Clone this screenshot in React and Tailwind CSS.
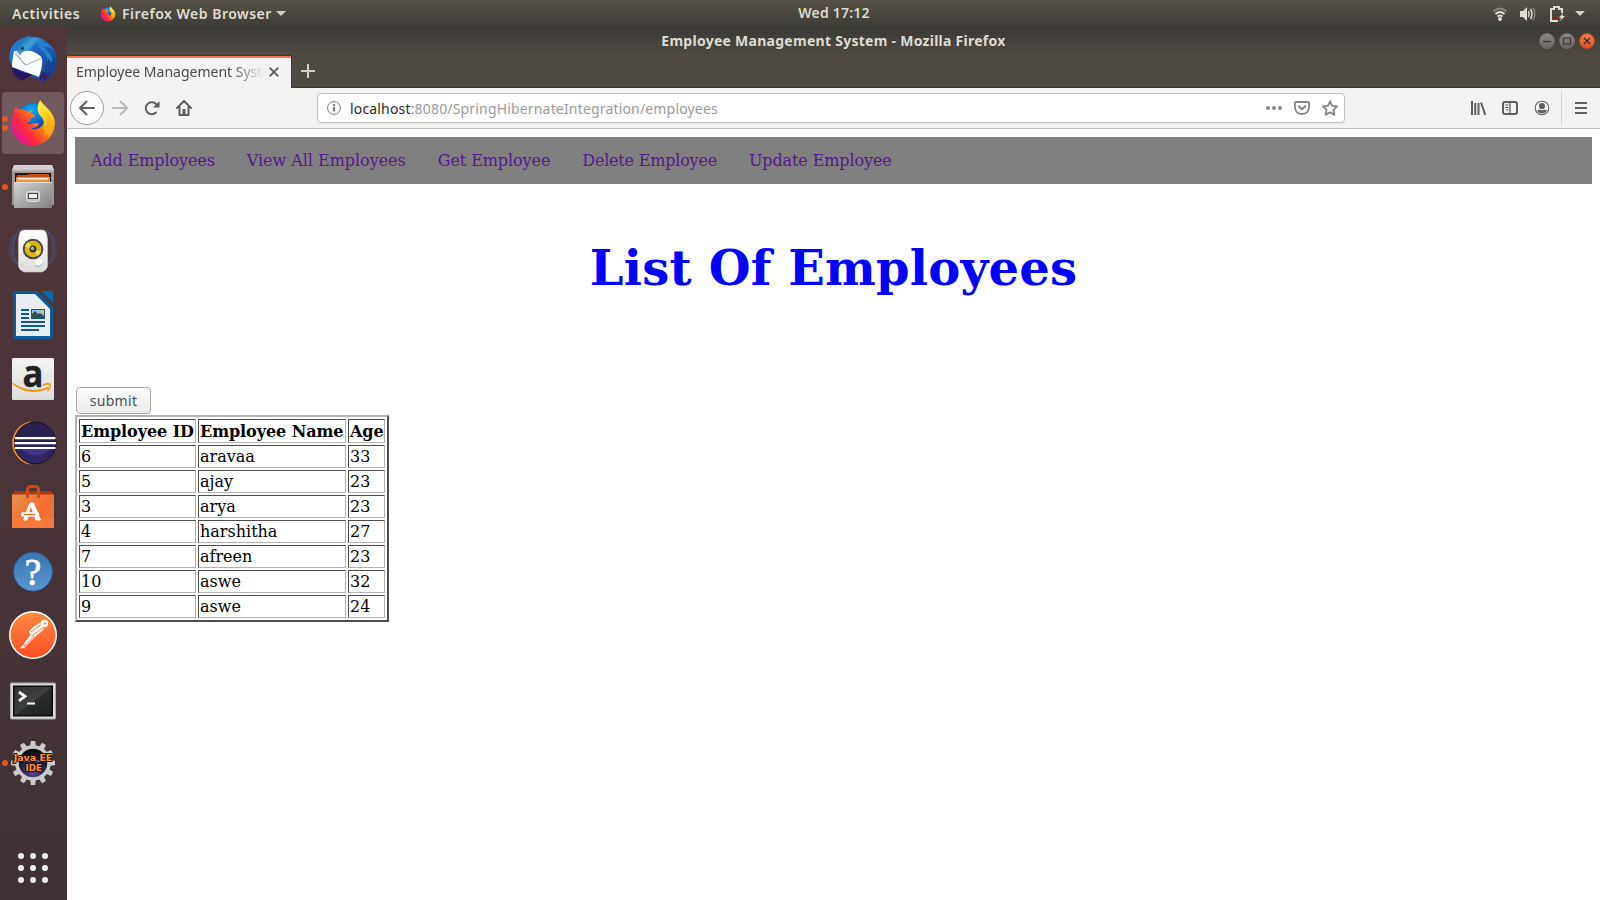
import React from "react";

const employees = [
  ["6", "aravaa", "33"],
  ["5", "ajay", "23"],
  ["3", "arya", "23"],
  ["4", "harshitha", "27"],
  ["7", "afreen", "23"],
  ["10", "aswe", "32"],
  ["9", "aswe", "24"],
];

const links = [
  ["Add Employees", "tracking-[-0.11px]"],
  ["View All Employees", "tracking-[-0.03px]"],
  ["Get Employee", "tracking-[-0.09px]"],
  ["Delete Employee", "tracking-[-0.2px]"],
  ["Update Employee", "tracking-[-0.11px]"],
];

function Firefox({ className, id }) {
  return (
    <svg viewBox="0 0 48 48" className={className}>
      <defs>
        <radialGradient id={id + "globe"} cx="0.45" cy="0.2" r="0.8">
          <stop offset="0" stopColor="#00b4f5" />
          <stop offset="0.5" stopColor="#0a63d8" />
          <stop offset="1" stopColor="#2b1a78" />
        </radialGradient>
        <linearGradient id={id + "body"} x1="0.95" y1="0.1" x2="0.1" y2="0.75">
          <stop offset="0" stopColor="#fff04a" />
          <stop offset="0.28" stopColor="#ffb80f" />
          <stop offset="0.52" stopColor="#ff6d1c" />
          <stop offset="0.76" stopColor="#ff2a40" />
          <stop offset="1" stopColor="#e0198c" />
        </linearGradient>
        <linearGradient id={id + "tail"} x1="0.3" y1="0" x2="0.6" y2="1">
          <stop offset="0" stopColor="#fff451" />
          <stop offset="0.5" stopColor="#ffd21f" />
          <stop offset="1" stopColor="#ff980e" />
        </linearGradient>
      </defs>
      <circle cx="24" cy="21" r="16.5" fill={`url(#${id}globe)`} />
      <path
        d="M7 6.500c.3 1.700 1.300 3 2.600 3.900 3-.9 5.800.1 8 1.700l5.900-.7c-.9 1-1.400 2-1.300 3.200.8.8 2.100 1 3.600 1.200.2 1.800-1.900 2.800-4.300 4.200l-.3 3.100c-1.500-.4-3 .2-3.600 1.200 1.500 1 3.200.9 5 .5 2-.5 4.300-1.200 6.200-.7.9.3 1.100 1.200.4 2.100-1.600 2.500-4.800 2.400-7.200 3.300 4.800 2 10.400-.1 12.600-5.400 2-5.200.3-9.800-2.600-12.800-3-3.600-1.500-7.300-.3-9.300l8.300 9c5.300 5.800 7.200 12.300 4.700 20-3 9.300-11.300 15.800-21.200 15.500C10.800 46.100 2.100 37.100 2.200 25.700c0-4.300 1-8 2.700-11.100C4.600 12 5.500 8.800 7 6.500Z"
        fill={`url(#${id}body)`}
      />
      <path
        d="M31.500 1c.6 4 3.200 5.900 6.300 8.700 6.400 5.600 9.500 13.300 6.600 20.900-.8 2.200-1.900 4.200-3.500 6-3.200-1.500-5.900-4.200-6-7.700.9-3.600.1-8.300-3-11.300-4.100-4.100-4.600-11.300-.4-16.600Z"
        fill={`url(#${id}tail)`}
      />
      <path d="M37 12c5.200 5 7 11.500 4.500 18-1.800 4.700-5 7.700-9 9.500 3-3.300 4.800-7 4.800-11.500 1.600-5 1.700-10.500-.3-16Z" fill="#ffab12" opacity=".6" />
    </svg>
  );
}

function Thunderbird() {
  return (
    <svg viewBox="0 0 48 48" className="size-12">
      <defs>
        <linearGradient id="tbBlue" x1="0" y1="0" x2="1" y2="1">
          <stop offset="0" stopColor="#1f87dc" />
          <stop offset="0.5" stopColor="#1b5fb9" />
          <stop offset="1" stopColor="#153a83" />
        </linearGradient>
        <linearGradient id="tbHead" x1="0" y1="0" x2="1" y2="0.6">
          <stop offset="0" stopColor="#0c5090" />
          <stop offset="0.5" stopColor="#3b9fd8" />
          <stop offset="1" stopColor="#1761b4" />
        </linearGradient>
      </defs>
      <path d="M17 2C8 4 1 11 .5 20c-.4 5 1 9 4 12l-2 2 9 11 8-4c7 3 11 3 14 6 7-3 12-9 14-17 1-8-1-15-6-20C35 3 26 0 17 2Z" fill="url(#tbBlue)" />
      <path d="M3 32c4 1 9 5 13 6l16-1-13 5-6 4C7 43 3 38 3 32Z" fill="#291660" />
      <path d="M5 16c5 0 8-2 12-1 8 1 13 4 16 8 1 6-1 13-3 19L3 32c0-6 1-10 2-16Z" fill="#fbfcfd" />
      <path d="M6 19l11 11 16-7M17 30l-2-1L6 16" fill="none" stroke="#a0a7b1" strokeWidth=".9" />
      <path d="M8 16C10 7 15 1 21 .5c-1 1-1.400 2-1 3 6-2 12-1 17 4-8-2-13 1-16 8-3 1-7-1-10 5Z" fill="url(#tbHead)" />
      <circle cx="13.500" cy="13.500" r="1.600" fill="#182746" />
      <path d="M29 7c7-1 13 3 16 9-4-4-7-5-10-4 5 5 6 10 4 15-1-6-4-11-9-14ZM37 15c5 4 7 8 6 14-1-3-3-5-5-6Z" fill="#2380d0" />
      <path d="M47 26l-3 5 1-7-5 7v-7l-4 7c0 7-2 11-4 15l4-4-1 4 5-5-1 3 5-6-1 2c3-4 5-9 4-14Z" fill="#184291" />
      <path d="M34 36l-3 9 5-7-1 8 5-8" fill="none" stroke="#352064" strokeWidth="2" />
    </svg>
  );
}

function Files() {
  return (
    <svg viewBox="0 0 48 48" className="size-12">
      <defs>
        <linearGradient id="cab" x1="0" y1="0" x2="1" y2="1">
          <stop offset="0" stopColor="#d4d4d4" />
          <stop offset=".5" stopColor="#a9a9a9" />
          <stop offset="1" stopColor="#828282" />
        </linearGradient>
      </defs>
      <path d="M5 2h38l2 6v34H3V8Z" fill="#999" />
      <path d="M5 2h38l2 5H3Z" fill="#d2d2d2" />
      <path d="M3 6.500h42v2H3Z" fill="#b8b8b8" />
      <path d="M6 10h36v10H6Z" fill="#251710" />
      <path d="M8 12h10l2-1h20v9H8Z" fill="#c74c13" />
      <path d="M7 14h34v5H7Z" fill="#ed9343" />
      <path d="M9 15h30v1.500H9Z" fill="#fff8e7" />
      <path d="M5 19h38v26H5Z" fill="url(#cab)" />
      <path d="M5 19h38v1H5Z" fill="#e0e0e0" />
      <rect x="17.500" y="28.500" width="13" height="10" rx="2" fill="#c0c0c0" stroke="#dedede" />
      <rect x="19.500" y="30.500" width="9" height="5" fill="#eee" stroke="#444" />
    </svg>
  );
}

function Rhythmbox() {
  return (
    <svg viewBox="0 0 48 48" className="size-12">
      <defs>
        <linearGradient id="spk" x1="0" y1="0" x2="0" y2="1">
          <stop offset="0" stopColor="#fff" />
          <stop offset="1" stopColor="#dcddda" />
        </linearGradient>
      </defs>
      <g fill="none" stroke="#455c8c" strokeWidth="2" opacity=".6">
        <path d="M10 3C2 13 2 31 9 37" /><path d="M38 3c8 10 8 28 1 34" />
        <path d="M5 8C0 16 0 28 5 35" opacity=".6" /><path d="M43 8c5 8 5 20 0 27" opacity=".6" />
      </g>
      <path d="M15 3h18q3.500 0 4.500 3.500L38.500 12v27q-.5 4-5.500 6H15q-5-2-5.500-6V12l1-5.500Q11.500 3 15 3Z" fill="url(#spk)" stroke="#c6c7c3" strokeWidth=".6" />
      <circle cx="24" cy="22" r="10.300" fill="#4a4a48" />
      <circle cx="24" cy="22" r="8.300" fill="#d9b814" />
      <path d="M24 22L16 19.500a8.300 8.300 0 0 1 3-4.500ZM24 22l8 2.500a8.300 8.300 0 0 1-3.500 4.500Z" fill="#f6e04a" />
      <circle cx="24" cy="22" r="3.500" fill="#32353a" />
      <circle cx="23.500" cy="21.500" r="1.700" fill="#a8b0ba" />
      <circle cx="30" cy="36" r="4" fill="#f8f8f7" />
      <path d="M26.500 38q3.500 4 7.500-2" fill="none" stroke="#b5b5b5" strokeWidth="1.300" />
      <rect x="14" y="36" width="4" height="4" rx="1" fill="none" stroke="#d4d4d4" />
    </svg>
  );
}

function Writer() {
  return (
    <svg viewBox="0 0 48 48" className="size-12">
      <path d="M6 0h22l16 16v30q0 2-2 2H6q-2 0-2-2V2q0-2 2-2Z" fill="#0b5c95" />
      <path d="M7 3h19l15 15v27H7Z" fill="#e9edf0" />
      <path d="M32 0h10q2 0 2 2v10Z" fill="#0967a5" />
      <g fill="#10578f">
        <path d="M12 18h8v2h-8zM12 22h8v2h-8zM12 26h8v2h-8zM12 30h24v2H12zM12 34h24v2H12zM12 38h18v2H12z" />
        <path d="M22 18h14v10H22z" />
      </g>
      <path d="M23 19h12v8H23Z" fill="#8cc6ed" />
      <circle cx="33.500" cy="20.500" r="1.500" fill="#f3cc45" />
      <path d="M23 27v-4l3-3 3 3 2-1 4 3v2Z" fill="#384c4e" />
    </svg>
  );
}

function Amazon() {
  return (
    <svg viewBox="0 0 48 48" className="size-12">
      <defs>
        <linearGradient id="amz" x1="0" y1="0" x2="0" y2="1">
          <stop offset="0" stopColor="#f4f4f4" /><stop offset="1" stopColor="#dcdcdc" />
        </linearGradient>
      </defs>
      <rect x="3" y="3" width="42" height="42" rx="1.500" fill="url(#amz)" />
      <text x="24" y="31.500" textAnchor="middle" fontFamily="Open Sans, sans-serif" fontWeight="700" fontSize="37" fill="#222" stroke="#222" strokeWidth=".3" textLength="21" lengthAdjust="spacingAndGlyphs">a</text>
      <path d="M3 28.500c11 10 26 11 37 4.500l-1-1.500C28 37 17 36 4 28Z" fill="#f59a16" />
      <path d="M34 30.500c3-2 6-2 7-1s-.5 3.500-2.500 6.500" fill="none" stroke="#f59a16" strokeWidth="1.700" />
    </svg>
  );
}

function Eclipse() {
  return (
    <svg viewBox="0 0 48 48" className="size-12">
      <defs>
        <linearGradient id="ecl" x1="0" y1="0" x2="0" y2="1">
          <stop offset="0" stopColor="#2a2150" /><stop offset=".6" stopColor="#2b2257" /><stop offset="1" stopColor="#32286a" />
        </linearGradient>
      </defs>
      <path d="M23 2.200a21.900 21.900 0 0 0 0 43.600C7 41 7 8 23 2.200Z" fill="#f7921d" />
      <circle cx="26.200" cy="24" r="20.800" fill="url(#ecl)" stroke="#15112f" strokeWidth="1" />
      <path d="M12 29h29a15 10 0 0 1-29 0Z" fill="#44358b" />
      <path d="M6 18h40.500v2.200H6zM5.500 23h41.500v2.200h-41.500zM6 28h40.500v2H6z" fill="#fff" />
    </svg>
  );
}

function Software() {
  return (
    <svg viewBox="0 0 48 48" className="size-12">
      <defs>
        <linearGradient id="bag" x1="0" y1="0" x2="1" y2="1">
          <stop offset="0" stopColor="#e99552" /><stop offset=".5" stopColor="#f16f32" /><stop offset="1" stopColor="#f37335" />
        </linearGradient>
      </defs>
      <g transform="translate(0 1)">
        <path d="M3 11l3-4h36l3 4Z" fill="#ad3912" />
        <path d="M3 10.500h42V44H3Z" fill="url(#bag)" />
        <path d="M3 34h42v10H3Z" fill="#ff8246" opacity=".45" />
        <path d="M18.500 14V6q0-3.500 3-3.500h5q3 0 3 3.500v8" fill="none" stroke="#cf4818" strokeWidth="3" />
        <path d="M14.500 36l6-16h1.500l-4 16ZM21 19h3.500l7 17h-4.500Z" fill="#fff" stroke="#fff" strokeWidth="1" />
        <path d="M14 30.500h14" stroke="#fff" strokeWidth="4.500" strokeLinecap="round" />
        <path d="M15 30.500h11" stroke="#ee6e30" strokeWidth="1.300" />
      </g>
    </svg>
  );
}

function Help() {
  return (
    <svg viewBox="0 0 48 48" className="size-12">
      <defs>
        <linearGradient id="hlp" x1="0" y1="0" x2="0" y2="1">
          <stop offset="0" stopColor="#3775b0" /><stop offset="1" stopColor="#5a99cf" />
        </linearGradient>
      </defs>
      <circle cx="24" cy="25.600" r="19.800" fill="#263149" />
      <circle cx="24" cy="24.800" r="19.300" fill="url(#hlp)" stroke="#2e649c" />
      <text x="24" y="38.300" textAnchor="middle" fontFamily="Liberation Serif, serif" fontSize="37" fill="#fff" stroke="#fff" strokeWidth=".8">?</text>
    </svg>
  );
}

function Postman() {
  return (
    <svg viewBox="0 0 48 48" className="size-12">
      <defs>
        <linearGradient id="pst" x1="0" y1="0" x2="0" y2="1">
          <stop offset="0" stopColor="#ff8b43" /><stop offset="1" stopColor="#ff4e25" />
        </linearGradient>
      </defs>
      <circle cx="24" cy="24" r="24" fill="#fff" />
      <circle cx="24" cy="24" r="22.500" fill="url(#pst)" />
      <circle cx="35.500" cy="12.500" r="3.700" fill="#fff" />
      <path d="M31 12c-5 2-8 5-11 8.500l1.500 3.500-8.500 11-2.500 2.500 4.500-.5 10.500-10.500 9-8v-4Z" fill="#fff" />
      <path d="M22 21l10-7.500M24 24l11-8M25.500 26l-3.500-2.500M14.500 36l10.500-10.500M34 13l4-1M14 33l2.500 1.500" stroke="#ff6a34" strokeWidth=".9" />
    </svg>
  );
}

function Terminal() {
  return (
    <svg viewBox="0 0 48 48" className="size-12">
      <defs>
        <linearGradient id="trm" x1="0" y1="0" x2="1" y2="1">
          <stop offset="0" stopColor="#303332" /><stop offset=".5" stopColor="#3d403f" /><stop offset=".52" stopColor="#2b2d2d" /><stop offset="1" stopColor="#1f2121" />
        </linearGradient>
      </defs>
      <rect x="1.500" y="8" width="45" height="36" rx="1" fill="#d7d7d5" stroke="#aaa" />
      <rect x="4" y="10.500" width="40" height="31" fill="#0b0b0b" />
      <rect x="5.500" y="12" width="37" height="28" fill="url(#trm)" />
      <path d="M10 17l6 4.300-6 4.500" fill="none" stroke="#fff" strokeWidth="2.800" />
      <path d="M18 28.500h8" stroke="#fff" strokeWidth="2" />
    </svg>
  );
}

function JavaEE() {
  return (
    <svg viewBox="0 0 48 48" className="size-12">
      <defs>
        <radialGradient id="jee" cx=".5" cy=".85" r=".8">
          <stop offset="0" stopColor="#554389" /><stop offset=".7" stopColor="#161429" /><stop offset="1" stopColor="#0b0b12" />
        </radialGradient>
      </defs>
      <g fill="#cacbc9">
        {[0, 30, 60, 90, 120, 150, 180, 210, 240, 270, 300, 330].map((a) => (
          <path key={a} d="M21 9l.8-7h4.400l.8 7Z" transform={`rotate(${a} 24 24)`} />
        ))}
      </g>
      <circle cx="24" cy="24" r="16" fill="url(#jee)" stroke="#cacbc9" strokeWidth="3.500" />
      <path d="M10 22h28" stroke="#665c86" strokeWidth="2" />
      <g fontFamily="DejaVu Sans, sans-serif" fontWeight="700" fontSize="9" fill="#ff9231" stroke="#1c100a" strokeWidth="1.800" strokeLinejoin="round" paintOrder="stroke" textAnchor="middle">
        <text x="24" y="22" textLength="38.500" lengthAdjust="spacingAndGlyphs">Java EE</text>
        <text x="24.800" y="32" textLength="16.500" lengthAdjust="spacingAndGlyphs">IDE</text>
      </g>
    </svg>
  );
}

const dock = [
  { el: <Thunderbird /> },
  { el: <Firefox id="dock" className="size-12" />, dots: 2, active: true },
  { el: <Files />, dots: 1 },
  { el: <Rhythmbox /> },
  { el: <Writer /> },
  { el: <Amazon /> },
  { el: <Eclipse /> },
  { el: <Software /> },
  { el: <Help /> },
  { el: <Postman /> },
  { el: <Terminal /> },
  { el: <JavaEE />, dots: 1 },
];

function Dock() {
  return (
    <aside className="flex w-[67px] shrink-0 flex-col bg-linear-to-b from-[#513639] via-[#49343a] to-[#3e3133] pt-px pb-[17px]">
      <div className="flex flex-col gap-0.5">
        {dock.map((item, i) => (
          <div key={i} className={"relative ml-0.5 flex h-[62px] w-[62px] items-center justify-center rounded " + (item.active ? "bg-[#705a5e]" : "")}>
            {item.el}
            {item.dots && (
              <div className="absolute inset-y-0 left-0 flex flex-col items-center justify-center gap-[3px]">
                {Array.from({ length: item.dots }, (_, k) => (
                  <span key={k} className="size-1.5 rounded-full bg-[#e95420]" />
                ))}
              </div>
            )}
          </div>
        ))}
      </div>
      <div className="mt-auto ml-[18px] grid w-[30px] grid-cols-3 gap-1.5">
        {Array.from({ length: 9 }, (_, i) => (
          <span key={i} className="size-1.5 rounded-full bg-[#f0efef]" />
        ))}
      </div>
    </aside>
  );
}

function TopBar() {
  return (
    <header className="flex h-[27px] shrink-0 items-center bg-linear-to-b from-[#575349] to-[#3d3c37] text-[14px] font-semibold text-[#dfdbd2]">
      <div className="flex w-[734px] items-center">
        <span className="ml-3 w-[88px] tracking-[0.58px] whitespace-nowrap">Activities</span>
        <Firefox id="top" className="size-4" />
        <span className="ml-1.5 w-[154px] tracking-[0.5px] whitespace-nowrap">Firefox Web Browser</span>
        <svg className="h-[5px] w-[10px]" viewBox="0 0 10 5"><path d="M0 0h10L5 5Z" fill="#d3d0c8" /></svg>
      </div>
      <span className="-mt-0.5 w-[200px] text-center tracking-[0.2px] whitespace-nowrap">Wed 17:12</span>
      <div className="ml-auto flex items-center pr-[15px]">
        <svg className="h-[14px] w-[14px]" viewBox="0 0 14 14" fill="none">
          <path d="M.5 4.500Q7-1.500 13.500 4.500" stroke="#85827a" strokeWidth="2" />
          <path d="M2.500 7Q7 3 11.500 7M4.500 9.500Q7 7.500 9.500 9.500" stroke="#dfdbd2" strokeWidth="1.800" />
          <circle cx="7" cy="12" r="2" fill="#dfdbd2" />
        </svg>
        <svg className="ml-[13px] h-[14px] w-[16px]" viewBox="0 0 16 14" fill="none">
          <path d="M0 4h3l4-4v14l-4-4H0Z" fill="#dfdbd2" />
          <path d="M8.500 4q1.500 3 0 6M10.500 2q3 5 0 10" stroke="#dfdbd2" strokeWidth="1.500" />
          <path d="M13 .500q3.500 6.500 0 13" stroke="#85827a" strokeWidth="1.500" />
        </svg>
        <svg className="ml-[14px] h-[16px] w-[15px]" viewBox="0 0 15 16" fill="none">
          <path d="M8 15H1V3h3V1h5v2h3v4" stroke="#dfdbd2" strokeWidth="2" />
          <path d="M3 11h4v2H3Z" fill="#c00" />
          <path d="M13 7l-4 5h2.500L9 16l6-6h-2.500Z" fill="#dfdbd2" />
        </svg>
        <svg className="ml-[10px] h-[5px] w-[10px]" viewBox="0 0 10 5"><path d="M0 0h10L5 5Z" fill="#d3d0c8" /></svg>
      </div>
    </header>
  );
}

function WindowButton({ children, close }) {
  return (
    <span className={"flex size-4 items-center justify-center rounded-full border bg-linear-to-b " + (close ? "border-[#c9481f] from-[#f27c55] to-[#e2521f]" : "border-[#6f6d66] from-[#8d8b84] to-[#67655e]")}>
      <svg viewBox="0 0 16 16" className="size-4 shrink-0" fill="none" stroke="#33322e" strokeWidth="1.200">{children}</svg>
    </span>
  );
}

function Chrome() {
  return (
    <div className="flex h-[102px] shrink-0 flex-col">
      <div className="flex h-7 items-center bg-linear-to-b from-[#3a3935] to-[#4e4b43]">
        <div className="w-20" />
        <div className="-mt-px flex-1 text-center text-[14px] font-bold tracking-[0.27px] text-[#dfdbd2]"><span className="whitespace-nowrap">Employee Management System - Mozilla Firefox</span></div>
        <div className="flex w-20 items-center justify-end gap-1 pr-[5px]">
          <WindowButton><path d="M4 8.500h8" /></WindowButton>
          <WindowButton><path d="M4.500 5h7v6h-7Z" /></WindowButton>
          <WindowButton close><path d="M5 5l6 6M11 5l-6 6" /></WindowButton>
        </div>
      </div>
      <div className="flex h-[33px] border-b border-[#393834] bg-[#4f4b43]">
        <div className="-mb-px flex w-[225px] border-t border-r border-[#393834]">
          <div className="flex flex-1 items-center border-t-2 border-[#f0794a] bg-[#f4f3f2]">
            <div className="-mt-[3px] ml-[9px] w-[188px] overflow-hidden text-[14px] whitespace-nowrap text-[#4b4b4b] [mask-image:linear-gradient(to_right,black_155px,transparent_188px)]">Employee Management System</div>
            <svg className="-mt-[3px] ml-[5px] size-[10px]" viewBox="0 0 10 10" stroke="#5c5c5c" strokeWidth="1.800"><path d="M.7.700l8.600 8.600M9.300.700L.7 9.300" /></svg>
          </div>
        </div>
        <svg className="mt-[9px] ml-[9px] size-[14px]" viewBox="0 0 14 14" stroke="#d2d0cc" strokeWidth="2"><path d="M7 0v14M0 7h14" /></svg>
      </div>
      <div className="flex h-[41px] items-center border-b border-[#c4c1bd] bg-[#f4f3f2] text-[#5f5f5f]">
        <div className="ml-[3px] flex size-[34px] items-center justify-center rounded-full border border-[#9f9f9f] bg-[#fcfcfc]">
          <svg viewBox="0 0 16 16" className="size-4" fill="none" stroke="currentColor" strokeWidth="2" strokeLinecap="round" strokeLinejoin="round"><path d="M15 8H1.500M7.500 1.500L1 8l6.500 6.500" /></svg>
        </div>
        <svg viewBox="0 0 16 16" className="ml-2 size-4 text-[#b9b9b8]" fill="none" stroke="currentColor" strokeWidth="2" strokeLinecap="round" strokeLinejoin="round"><path d="M1 8h13.500M8.500 1.500L15 8l-6.500 6.500" /></svg>
        <svg viewBox="0 0 16 16" className="ml-4 size-4" fill="none" stroke="currentColor" strokeWidth="2"><path d="M12 12.500A6 6 0 1 1 12.800 5" strokeLinecap="round" /><path d="M15.500 1v6.500H9Z" fill="currentColor" stroke="none" /></svg>
        <svg viewBox="0 0 16 16" className="ml-4 size-4" fill="none" stroke="currentColor" strokeWidth="2" strokeLinecap="round" strokeLinejoin="round"><path d="M1 8l7-7 7 7M3.500 7v8h9V7" /><path d="M6.500 9h3v6h-3Z" fill="currentColor" stroke="none" /></svg>
        <div className="ml-[125px] flex h-[30px] w-[1028px] items-center rounded border border-[#c4c1bd] bg-white shadow-[0_1px_2px_rgba(0,0,0,0.05)]">
          <svg viewBox="0 0 14 14" className="ml-[9px] size-[14px]" fill="none" stroke="#777" strokeWidth="1"><circle cx="7" cy="7" r="6.400" /><path d="M7 6v4.500M7 3v1.800" strokeWidth="2" /></svg>
          <span className="ml-[9px] text-[14px] tracking-[0.17px] whitespace-nowrap text-[#9b9b9b]"><span className="text-[#2b2b2b]">localhost</span>:8080/SpringHibernateIntegration/employees</span>
          <div className="mr-[6px] ml-auto flex items-center text-[#848484]">
            <svg viewBox="0 0 16 16" className="size-4" fill="currentColor"><circle cx="2" cy="8" r="2" /><circle cx="8" cy="8" r="2" /><circle cx="14" cy="8" r="2" /></svg>
            <svg viewBox="0 0 16 16" className="ml-3 size-4" fill="none" stroke="currentColor" strokeWidth="1.800" strokeLinecap="round" strokeLinejoin="round"><path d="M2 2h12q1.100 0 1.100 1.100V7Q14.500 14 8 14T.9 7V3.100Q.9 2 2 2Z" /><path d="M4.800 6.200L8 9.300l3.200-3.100" strokeWidth="2" /></svg>
            <svg viewBox="0 0 16 16" className="ml-3 size-4" fill="none" stroke="currentColor" strokeWidth="1.800" strokeLinejoin="round"><path d="M8 1.300l2.100 4.500 5 .6-3.700 3.400 1 5L8 12.400l-4.400 2.400 1-5L.9 6.400l5-.6Z" /></svg>
          </div>
        </div>
        <div className="ml-auto flex items-center">
          <svg viewBox="0 0 16 16" className="size-4" fill="none" stroke="currentColor" strokeWidth="2"><path d="M2 1v14M5.200 3v12M8.500 3v12M11 2.500L15.300 15" /></svg>
          <svg viewBox="0 0 16 16" className="ml-4 size-4" fill="none" stroke="currentColor" strokeWidth="2"><rect x="1" y="2" width="14" height="12" rx="2" /><path d="M8 2v12" strokeWidth="1.300" /><path d="M3 5h3.500M3 7.500h3.500M4 10h2.500" strokeWidth="1" /></svg>
          <svg viewBox="0 0 16 16" className="ml-4 size-4" fill="none" stroke="currentColor" strokeWidth="1.100"><circle cx="8" cy="8" r="6.800" /><circle cx="8" cy="6" r="3.100" fill="currentColor" stroke="none" /><path d="M3.200 10.500q.6-1 2.300-.8Q8 10.600 10.500 9.700q1.700-.2 2.300.8Q11.500 13.500 8 13.500T3.200 10.500Z" fill="currentColor" stroke="none" /></svg>
          <div className="ml-[11px] h-[34px] w-px bg-[#d2d0ce]" />
          <svg viewBox="0 0 12 12" className="mr-[13px] ml-[13px] size-3" stroke="currentColor" strokeWidth="2"><path d="M0 1h12M0 6h12M0 11h12" /></svg>
        </div>
      </div>
    </div>
  );
}

const cell = "border border-t-[#4c4c4c] border-l-[#4c4c4c] border-r-[#b2b2b2] border-b-[#b2b2b2] pl-px whitespace-nowrap";

function Page() {
  return (
    <main className="flex flex-1 flex-col items-start bg-white p-2 text-[16px] text-black [font-family:'DejaVu_Serif',serif]">
      <nav className="flex h-[47px] w-full items-center gap-8 bg-[#808080] px-4 text-[#551a8b]">
        {links.map(([label, tracking]) => (
          <a key={label} className={"whitespace-nowrap " + tracking}>{label}</a>
        ))}
      </nav>
      <h1 className="mt-14 w-full text-center text-[48px] leading-[56px] font-bold tracking-[0.18px] whitespace-nowrap text-[#00f]">List Of Employees</h1>
      <button className="mt-[91px] ml-px h-[27px] w-[75px] rounded border border-[#aeaba7] bg-linear-to-b from-[#fdfdfd] to-[#ebebea] text-[14px] tracking-[0.3px] text-[#4c4c4c] [font-family:'Noto_Sans',sans-serif]">submit</button>
      <div className="mt-px grid grid-cols-[117px_148px_37px] grid-rows-[24px_repeat(7,23px)] gap-0.5 border-2 border-t-[#b2b2b2] border-r-[#4c4c4c] border-b-[#4c4c4c] border-l-[#b2b2b2] p-0.5">
        {["Employee ID", "Employee Name", "Age"].map((h) => (
          <div key={h} className={cell + " leading-[23px] font-bold tracking-[-0.07px]"}>{h}</div>
        ))}
        {employees.flatMap((row, i) => row.map((v, j) => (
          <div key={i + "-" + j} className={cell + " leading-[21px]"}>{v}</div>
        )))}
      </div>
    </main>
  );
}

export default function App() {
  return (
    <div className="flex h-[900px] w-[1600px] flex-col overflow-hidden bg-white [font-family:'Noto_Sans','Open_Sans',sans-serif]">
      <TopBar />
      <div className="flex min-h-0 flex-1">
        <Dock />
        <div className="flex min-w-0 flex-1 flex-col">
          <Chrome />
          <Page />
        </div>
      </div>
    </div>
  );
}
